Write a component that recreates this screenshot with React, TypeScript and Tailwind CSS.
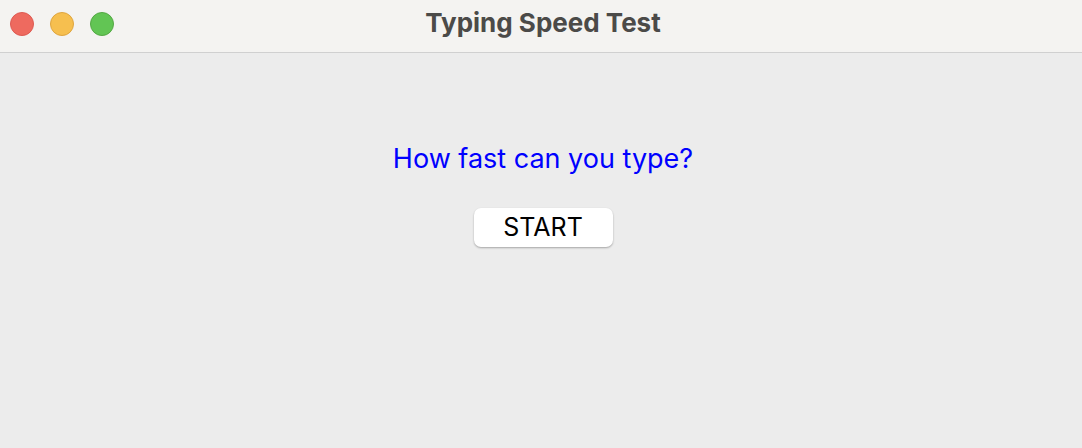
import React from 'react';

const App: React.FC = () => {
  return (
    <div className="flex h-[448px] w-[1082px] flex-col bg-[#ececec] font-['Inter','Liberation_Sans',Arial,sans-serif]">
      {/* Title bar */}
      <div className="relative flex h-[53px] shrink-0 items-center justify-center border-b border-[#d0d0d0] bg-[#f4f3f1] pb-[7px] pl-[4px]">
        <div className="absolute left-[10px] top-[12px] flex gap-[16px]">
          <span className="h-[24px] w-[24px] rounded-full border border-[#de5a52] bg-[#ee6a5f]"></span>
          <span className="h-[24px] w-[24px] rounded-full border border-[#dfa53f] bg-[#f6bf4f]"></span>
          <span className="h-[24px] w-[24px] rounded-full border border-[#54a844] bg-[#62c554]"></span>
        </div>
        <span className="text-[26px] leading-[32px] font-bold text-[#4b4a48]">Typing Speed Test</span>
      </div>

      {/* Content */}
      <div className="flex flex-col items-center pl-[4px] pt-[88px]">
        <p className="text-[27px] leading-[36px] text-[#0000ff]">How fast can you type?</p>
        <button className="mt-[31px] h-[39px] w-[139px] rounded-[7px] bg-white text-[25px] text-black shadow-[0_1px_2px_rgba(0,0,0,0.3)]">
          START
        </button>
      </div>
    </div>
  );
};

export default App;
